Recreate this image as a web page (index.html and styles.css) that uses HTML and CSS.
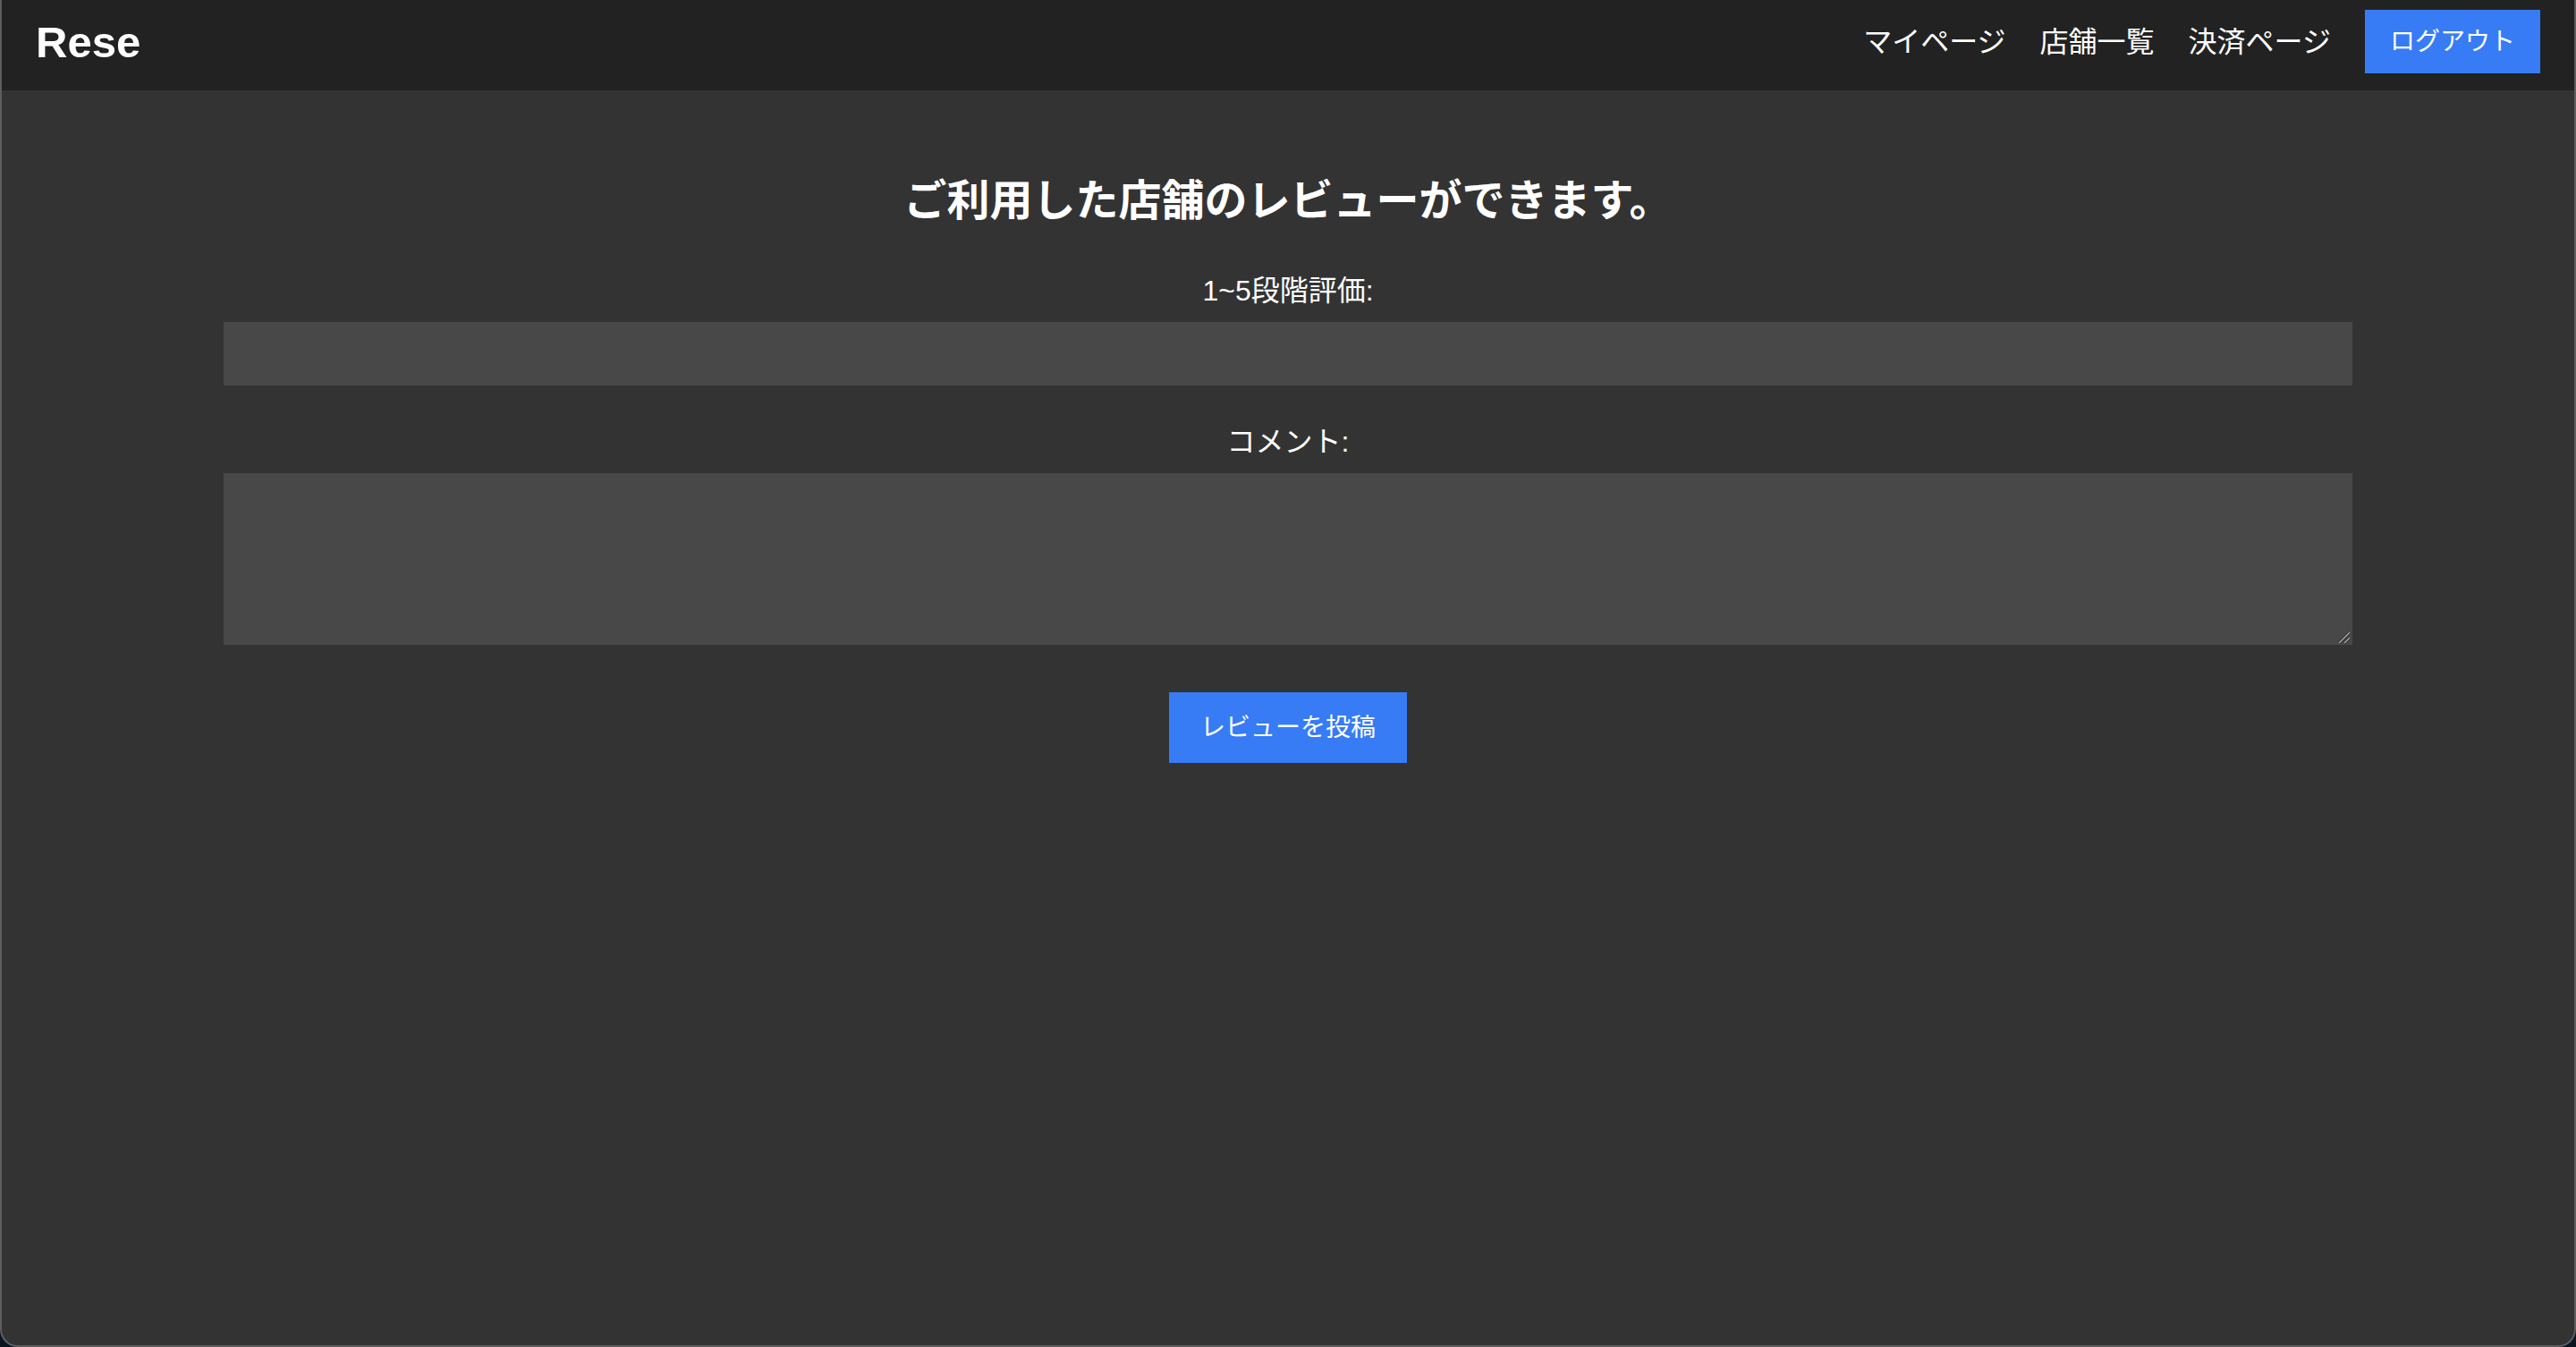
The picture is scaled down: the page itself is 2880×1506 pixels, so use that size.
FILE: index.html
```html
<!DOCTYPE html>
<html lang="ja">
<head>
<meta charset="utf-8">
<title>Rese - レビュー</title>
<link rel="stylesheet" href="styles.css">
</head>
<body>
<div class="window">
  <header class="header">
    <div class="logo">Rese</div>
    <nav class="nav">
      <a class="nav-link" href="#">マイページ</a>
      <a class="nav-link" href="#">店舗一覧</a>
      <a class="nav-link" href="#">決済ページ</a>
      <button class="logout" type="button">ログアウト</button>
    </nav>
  </header>
  <main class="main">
    <h2 class="title">ご利用した店舗のレビューができます。</h2>
    <form class="review-form">
      <div class="field field-rating">
        <label class="label" for="rating">1~5段階評価:</label>
        <input class="input" id="rating" type="text">
      </div>
      <div class="field field-comment">
        <label class="label" for="comment">コメント:</label>
        <div class="textarea-wrap">
          <textarea class="textarea" id="comment"></textarea>
          <svg class="resizer" width="16" height="16" viewBox="0 0 16 16" aria-hidden="true">
            <path d="M2 15 L14 3" stroke="#222" stroke-width="3" stroke-linecap="butt"/>
            <path d="M8 15 L14 9" stroke="#222" stroke-width="3" stroke-linecap="butt"/>
            <path d="M2 15 L14 3" stroke="#b0b0b0" stroke-width="1.4"/>
            <path d="M8 15 L14 9" stroke="#b0b0b0" stroke-width="1.4"/>
          </svg>
        </div>
      </div>
      <div class="actions">
        <button class="submit" type="button">レビューを投稿</button>
      </div>
    </form>
  </main>
</div>
</body>
</html>
```

FILE: styles.css
```css
* {
  box-sizing: border-box;
}

html, body {
  margin: 0;
  padding: 0;
}

body {
  width: 2880px;
  height: 1506px;
  background: #0b1520;
  font-family: "Liberation Sans", "Noto Sans CJK JP", sans-serif;
  color: #ffffff;
  overflow: hidden;
}

.window {
  width: 2880px;
  height: 1506px;
  display: flex;
  flex-direction: column;
  background: #333333;
  border: 2px solid #5e5e5e;
  border-top: none;
  border-radius: 0 0 20px 20px;
  overflow: hidden;
}

.header {
  flex: none;
  height: 101px;
  background: #222222;
  display: flex;
  align-items: center;
  justify-content: space-between;
  padding: 10px 38px 18px 38px;
}

.logo {
  font-size: 49px;
  font-weight: bold;
  line-height: 60px;
}

.nav {
  display: flex;
  align-items: center;
  gap: 38px;
}

.nav-link {
  color: #ffffff;
  text-decoration: none;
  font-size: 32px;
  line-height: 40px;
}

.logout {
  height: 71px;
  padding: 0 28px;
  border: none;
  background: #377bf5;
  color: #ffffff;
  font-family: inherit;
  font-size: 28px;
  line-height: 71px;
  cursor: pointer;
}

.main {
  flex: 1;
  padding-top: 95px;
}

.title {
  margin: 0;
  text-align: center;
  font-size: 48px;
  font-weight: bold;
  line-height: 58px;
}

.review-form {
  width: 2380px;
  margin: 51px auto 0;
}

.field-comment {
  margin-top: 43px;
}

.label {
  display: block;
  text-align: center;
  font-size: 32px;
  line-height: 40px;
  margin-bottom: 15px;
}

.input,
.textarea {
  display: block;
  width: 100%;
  border: none;
  outline: none;
  background: #484848;
  color: #ffffff;
  font-family: inherit;
  font-size: 28px;
  margin: 0;
  border-radius: 0;
}

.input {
  height: 71px;
  padding: 0 16px;
}

.textarea-wrap {
  position: relative;
}

.textarea {
  height: 192px;
  padding: 12px 16px;
  resize: none;
}

.resizer {
  position: absolute;
  right: 1px;
  bottom: 1px;
  pointer-events: none;
}

.actions {
  display: flex;
  justify-content: center;
  margin-top: 53px;
}

.submit {
  height: 79px;
  padding: 0 35px;
  border: none;
  background: #377bf5;
  color: #ffffff;
  font-family: inherit;
  font-size: 28px;
  line-height: 79px;
  cursor: pointer;
}
```
